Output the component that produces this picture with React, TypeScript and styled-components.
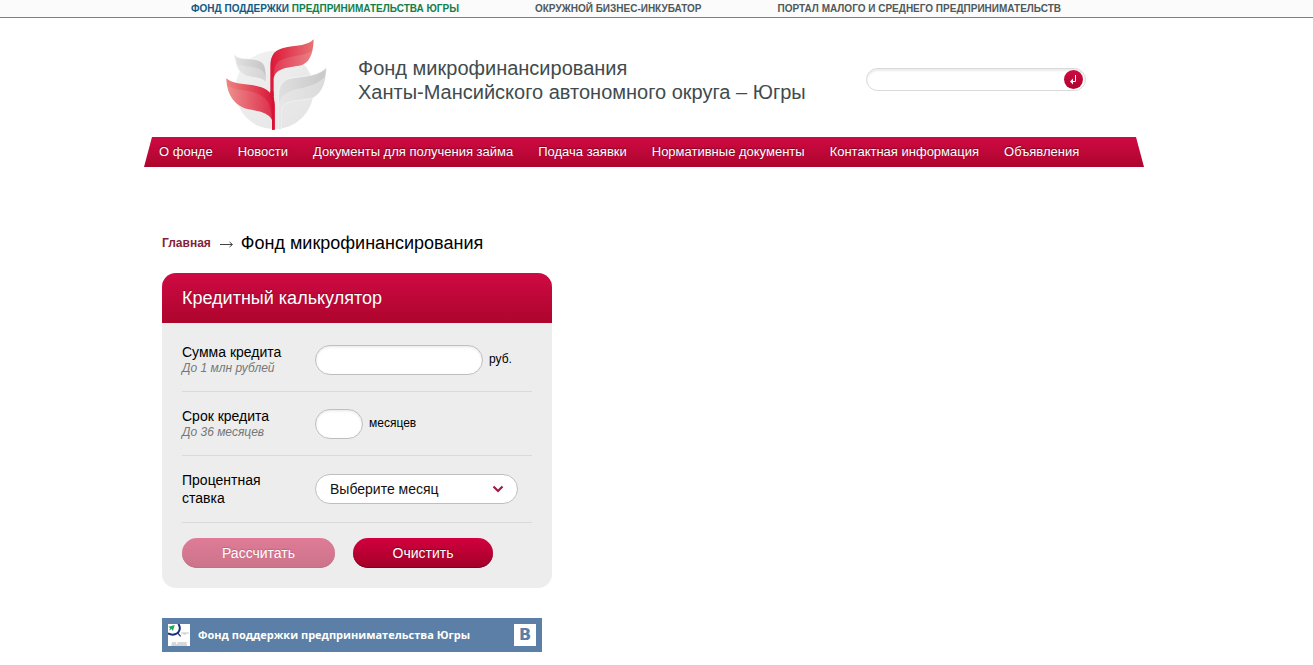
import React from "react";
import styled, { createGlobalStyle, css } from "styled-components";

const GlobalStyle = createGlobalStyle`
  *, *::before, *::after { box-sizing: border-box; }
  body {
    margin: 0;
    background: #fff;
    color: #000;
    font: 14px/18px "Liberation Sans", Arial, sans-serif;
  }
  a { color: inherit; text-decoration: none; }
  button, input, select { font: inherit; }
`;

const redGradient = css`
  background: linear-gradient(#cf0a43, #ad052d);
`;

const Container = styled.div`
  width: 100%;
  max-width: 1000px;
  margin: 0 auto;
`;

const TopBar = styled.div`
  padding-right: 25px;
  background: #fbfbfb;
  border-bottom: 1px solid #718489;
`;

const TopLinks = styled(Container)`
  display: flex;
  gap: 76px;
  padding-left: 47px;
  font-size: 10px;
  line-height: 17px;
  font-weight: bold;
  color: #4f595c;
  text-transform: uppercase;
  white-space: nowrap;
`;

const Tint = styled.span<{ $color: string }>`
  color: ${(p) => p.$color};
`;

const Page = styled.div`
  padding-right: 25px;
`;

const Header = styled.header`
  display: flex;
  align-items: center;
  height: 119px;
  padding: 0 58px 0 81px;
`;

const LogoLink = styled.a`
  display: block;
  height: 93px;
  margin-top: 14px;
  margin-right: 30px;
`;

const SiteTitle = styled.p`
  margin: 4px 0 0;
  font-size: 20px;
  line-height: 24px;
  color: #414b4d;
  white-space: nowrap;
`;

const Search = styled.form`
  display: flex;
  align-items: center;
  width: 220px;
  height: 23px;
  margin: 4px 0 0 auto;
  padding-right: 2px;
  border: 1px solid #d9d9d9;
  border-radius: 12px;
  box-shadow: inset 0 2px 2px #ececec;
`;

const SearchInput = styled.input`
  flex: 1;
  min-width: 0;
  height: 19px;
  padding: 0 10px;
  border: 0;
  background: transparent;
  font-size: 12px;
  outline: none;
`;

const SearchButton = styled.button`
  display: flex;
  width: 19px;
  height: 19px;
  padding: 0;
  border: 0;
  border-radius: 50%;
  ${redGradient}
`;

const Nav = styled.nav`
  display: flex;
  gap: 25px;
  padding-left: 15px;
  font-size: 13px;
  line-height: 30px;
  color: #fff;
  white-space: nowrap;
  text-shadow: 0 -1px 1px #6d0820;
  clip-path: polygon(8px 0, calc(100% - 8px) 0, 100% 100%, 0 100%);
  ${redGradient}
`;

const Main = styled.main`
  padding: 66px 18px 13px;
`;

const Breadcrumbs = styled.div`
  display: flex;
  align-items: center;
  gap: 8px;
  line-height: 20px;
`;

const HomeLink = styled.a`
  font-size: 12px;
  font-weight: bold;
  color: #841f38;
`;

const PageTitle = styled.h1`
  margin: 0;
  font-size: 18px;
  font-weight: normal;
`;

const Calculator = styled.form`
  width: 390px;
  margin-top: 20px;
  border-radius: 14px;
  background: #ededed;
  overflow: hidden;
`;

const CalcTitle = styled.h2`
  margin: 0;
  padding: 0 20px;
  font-size: 18px;
  line-height: 50px;
  font-weight: normal;
  color: #fff;
  text-shadow: 0 -1px 1px #8d0c2a;
  ${redGradient}
`;

const CalcBody = styled.div`
  padding: 5px 20px 20px;
`;

const Row = styled.div`
  display: flex;
  align-items: flex-start;
  padding: 15px 0;
  border-bottom: 1px solid #dadada;
`;

const RowLabel = styled.label`
  width: 133px;
  padding-right: 40px;
  white-space: nowrap;
`;

const WrappedLabel = styled(RowLabel)`
  white-space: normal;
`;

const Hint = styled.em`
  display: block;
  font-size: 12px;
  line-height: 15px;
  color: #777;
`;

const field = css`
  height: 30px;
  border: 1px solid #bfbfbf;
  border-radius: 15px;
  background: #fff;
  color: #111;
  outline: none;
`;

const Field = styled.div`
  display: flex;
  gap: 6px;
  margin-top: 2px;
  font-size: 12px;
  line-height: 28px;
`;

const TextInput = styled.input<{ $width: number }>`
  width: ${(p) => p.$width}px;
  padding: 0 14px;
  ${field}
  box-shadow: inset 0 1px 3px #e6e6e6;
`;

const SelectBox = styled.div`
  display: grid;
  align-items: center;
  width: 203px;
  margin-top: 3px;

  & > * {
    grid-area: 1 / 1;
  }

  svg {
    justify-self: end;
    margin-right: 14px;
    pointer-events: none;
  }
`;

const Select = styled.select`
  appearance: none;
  width: 100%;
  padding: 0 30px 0 14px;
  ${field}
`;

const Actions = styled.div`
  display: flex;
  gap: 18px;
  padding-top: 15px;
`;

const Button = styled.button<{ $width: number }>`
  width: ${(p) => p.$width}px;
  height: 30px;
  padding: 0;
  border: 0;
  border-radius: 15px;
  background: linear-gradient(#d2003f, #a30028);
  box-shadow: inset 0 -1px 0 #82001e;
  color: #fff;
  text-shadow: 0 -1px 1px #7d001e;

  &:disabled {
    background: linear-gradient(#df7b97, #cb748a);
    box-shadow: inset 0 -1px 0 #bd7285;
    text-shadow: 0 -1px 1px #c0607a;
  }
`;

const VkBar = styled.a`
  display: flex;
  align-items: center;
  width: 380px;
  height: 34px;
  margin-top: 30px;
  padding: 0 6px;
  background: #5b7fa6;
  color: #fff;
  font: bold 11px/22px "Open Sans", Tahoma, sans-serif;
  white-space: nowrap;
`;

const VkName = styled.span`
  flex: 1;
  margin-left: 8px;
`;

const VkBadge = styled.span`
  width: 22px;
  background: #fff;
  color: #5b7fa6;
  font-family: "DejaVu Sans", sans-serif;
  font-size: 16px;
  text-align: center;
`;

const Logo = () => (
  <svg width="103" height="93" viewBox="30 18 309 279" role="img" aria-label="Фонд микрофинансирования">
    <defs>
      <linearGradient id="disc" x1="0" y1="0" x2="1" y2="1">
        <stop offset="0" stopColor="#f3f3f3" />
        <stop offset="1" stopColor="#e3e3e3" />
      </linearGradient>
      <linearGradient id="redTop" x1="0" y1="0" x2="1" y2="0">
        <stop offset="0" stopColor="#dc1737" />
        <stop offset="1" stopColor="#e87276" />
      </linearGradient>
      <linearGradient id="redLeft" x1="0" y1="0" x2="1" y2="0">
        <stop offset="0" stopColor="#ec8581" />
        <stop offset="1" stopColor="#d91235" />
      </linearGradient>
      <linearGradient id="greyLeft" x1="0" y1="0" x2="1" y2="0">
        <stop offset="0" stopColor="#e2e2e2" />
        <stop offset="1" stopColor="#c4c4c4" />
      </linearGradient>
      <linearGradient id="greyRight" x1="0" y1="0" x2="1" y2="0">
        <stop offset="0" stopColor="#e0e0e0" />
        <stop offset="1" stopColor="#c8c8c8" />
      </linearGradient>
    </defs>
    <circle cx="178" cy="174" r="118" fill="url(#disc)" />
    <path d="M58 68C76 88 106 74 135 87C151 95 155 112 153 153C146 139 127 139 102 134C67 125 64 100 58 68Z" fill="url(#greyLeft)" stroke="#f7f7f7" strokeWidth="2" />
    <path d="M62 94C83 109 119 98 143 117C151 125 153 139 153 153C146 139 127 139 102 134C75 127 67 114 62 94Z" fill="#f0f0f0" opacity=".35" />
    <path d="M190 292V192C190 158 204 141 236 137C272 132 310 132 334 107C333 150 320 195 279 201C242 207 204 205 199 232V292Z" fill="url(#greyRight)" stroke="#f7f7f7" strokeWidth="2" />
    <path d="M191 222C195 183 229 174 260 168C293 162 315 150 330 133C324 170 309 197 279 201C242 207 204 205 199 232V292H191Z" fill="#ededed" opacity=".5" />
    <path d="M166 192V105C166 67 180 52 214 46C249 39 276 42 296 22C295 58 287 96 252 101C219 106 178 108 176 142V192Z" fill="url(#redTop)" />
    <path d="M177 124C176 90 201 80 225 75C258 69 281 67 292 55C287 84 273 98 252 101C219 106 184 106 177 134Z" fill="#fff" opacity=".12" />
    <path d="M34 139C57 161 100 152 139 166C164 176 179 191 179 221V293H171V264C160 241 132 238 97 231C56 221 35 183 34 139Z" fill="url(#redLeft)" />
    <path d="M38 163C76 181 124 170 154 203C166 216 169 236 171 264C160 241 132 238 97 231C63 222 43 194 38 163Z" fill="#fff" opacity=".1" />
    <path d="M166 178H175L179 221V293H171V205L166 190Z" fill="#d91235" />
  </svg>
);

const FundAvatar = () => (
  <svg width="22" height="22" viewBox="0 0 66 66" aria-hidden="true">
    <rect width="66" height="66" fill="#fff" />
    <path d="M31 0C40 12 35 31 14 32C8 32 4 31 0 28" fill="none" stroke="#17327c" strokeWidth="6" />
    <path d="M28 26L38 37" stroke="#17327c" strokeWidth="4" />
    <path d="M1 8L20 3L15 21L10 15L4 20L6 12Z" fill="#25a760" />
    <path d="M39 27H63M46 30H54" stroke="#a6abb5" strokeWidth="2" />
    <path d="M12 57H24M28 57H56M10 63H57" stroke="#b0b0b0" strokeWidth="3" />
  </svg>
);

const navItems = [
  "О фонде",
  "Новости",
  "Документы для получения займа",
  "Подача заявки",
  "Нормативные документы",
  "Контактная информация",
  "Объявления",
];

export default function App() {
  return (
    <>
      <GlobalStyle />
      <TopBar>
        <TopLinks>
          <a href="#fund">
            <Tint $color="#125a86">Фонд поддержки</Tint> <Tint $color="#12804b">предпринимательства Югры</Tint>
          </a>
          <a href="#incubator">Окружной бизнес-инкубатор</a>
          <a href="#portal">Портал малого и среднего предпринимательств</a>
        </TopLinks>
      </TopBar>
      <Page>
        <Container>
          <Header>
            <LogoLink href="#home">
              <Logo />
            </LogoLink>
            <SiteTitle>
              Фонд микрофинансирования
              <br />
              Ханты-Мансийского автономного округа – Югры
            </SiteTitle>
            <Search onSubmit={(e) => e.preventDefault()}>
              <SearchInput type="text" aria-label="Поиск" />
              <SearchButton type="submit" aria-label="Найти">
                <svg width="19" height="19" viewBox="0 0 19 19" aria-hidden="true">
                  <path d="M11.5 5V11.5H8" fill="none" stroke="#fff" />
                  <path d="M6 11.5L9 8.5V14.5Z" fill="#fff" />
                </svg>
              </SearchButton>
            </Search>
          </Header>
          <Nav>
            {navItems.map((item) => (
              <a href="#section" key={item}>
                {item}
              </a>
            ))}
          </Nav>
          <Main>
            <Breadcrumbs>
              <HomeLink href="#home">Главная</HomeLink>
              <svg width="14" height="9" viewBox="0 0 14 9" aria-hidden="true">
                <path d="M1 5.5H13" stroke="#444" />
                <path d="M10.5 3L13.5 5.5L10.5 8" fill="none" stroke="#444" />
              </svg>
              <PageTitle>Фонд микрофинансирования</PageTitle>
            </Breadcrumbs>
            <Calculator onSubmit={(e) => e.preventDefault()}>
              <CalcTitle>Кредитный калькулятор</CalcTitle>
              <CalcBody>
                <Row>
                  <RowLabel htmlFor="amount">
                    Сумма кредита
                    <Hint>До 1 млн рублей</Hint>
                  </RowLabel>
                  <Field>
                    <TextInput id="amount" type="text" $width={168} />
                    руб.
                  </Field>
                </Row>
                <Row>
                  <RowLabel htmlFor="term">
                    Срок кредита
                    <Hint>До 36 месяцев</Hint>
                  </RowLabel>
                  <Field>
                    <TextInput id="term" type="text" $width={48} />
                    месяцев
                  </Field>
                </Row>
                <Row>
                  <WrappedLabel htmlFor="rate">Процентная ставка</WrappedLabel>
                  <SelectBox>
                    <Select id="rate">
                      <option>Выберите месяц</option>
                    </Select>
                    <svg width="12" height="8" viewBox="0 0 12 8" aria-hidden="true">
                      <path d="M1.5 1.5L6 6L10.5 1.5" fill="none" stroke="#a01c40" strokeWidth="2.2" />
                    </svg>
                  </SelectBox>
                </Row>
                <Actions>
                  <Button type="submit" disabled $width={153}>
                    Рассчитать
                  </Button>
                  <Button type="reset" $width={140}>
                    Очистить
                  </Button>
                </Actions>
              </CalcBody>
            </Calculator>
            <VkBar href="#vk">
              <FundAvatar />
              <VkName>Фонд поддержки предпринимательства Югры</VkName>
              <VkBadge>B</VkBadge>
            </VkBar>
          </Main>
        </Container>
      </Page>
    </>
  );
}
